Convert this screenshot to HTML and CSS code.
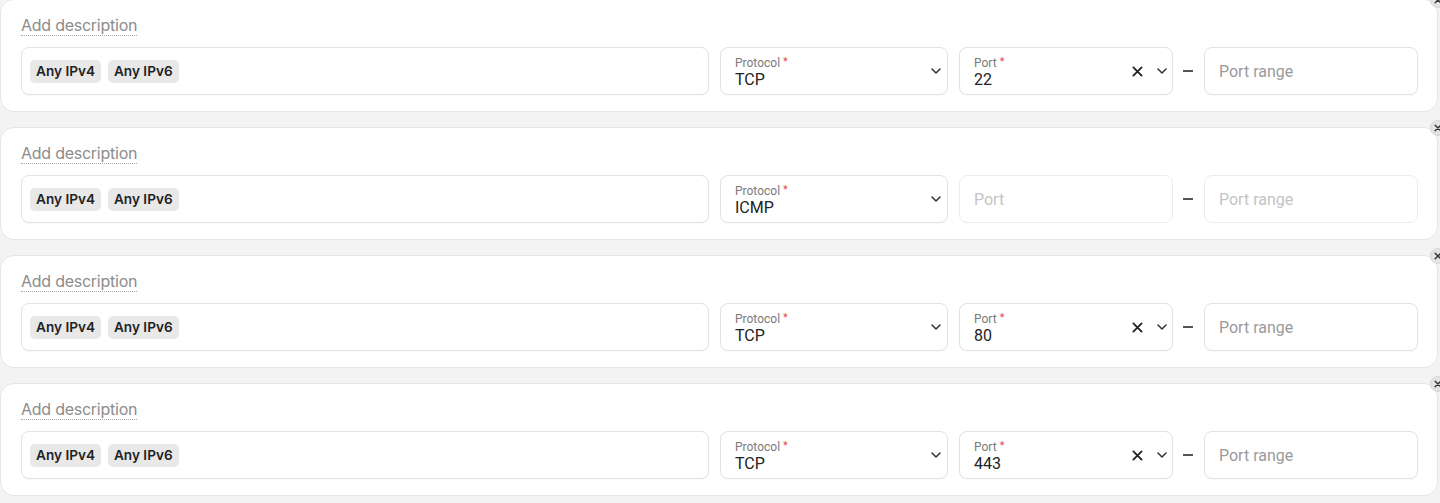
FILE: index.html
```html
<!DOCTYPE html>
<html>
<head>
<meta charset="utf-8">
<link rel="stylesheet" href="styles.css">
</head>
<body>
<div class="rules">
  <div class="card">
    <button class="remove" aria-label="Remove"><svg viewBox="0 0 10 10" width="8" height="8"><path d="M1.5 1.5l7 7M8.5 1.5l-7 7" stroke="#333" stroke-width="1.8" stroke-linecap="round"/></svg></button>
    <div class="desc-row"><span class="desc">Add description</span></div>
    <div class="fields">
      <div class="field addr"><span class="chip">Any IPv4</span><span class="chip">Any IPv6</span></div>
      <div class="field proto">
        <div class="stack"><span class="label">Protocol<span class="req">*</span></span><span class="value">TCP</span></div>
        <svg class="chev" viewBox="0 0 10 6" width="10" height="6"><path d="M1 1l4 4 4-4" fill="none" stroke="#333" stroke-width="1.5" stroke-linecap="round" stroke-linejoin="round"/></svg>
      </div>
      <div class="field port">
        <div class="stack"><span class="label">Port<span class="req">*</span></span><span class="value">22</span></div>
        <svg class="clear" viewBox="0 0 12 12" width="11" height="11"><path d="M1.5 1.5l9 9M10.5 1.5l-9 9" fill="none" stroke="#222" stroke-width="2" stroke-linecap="round"/></svg>
        <svg class="chev" viewBox="0 0 10 6" width="10" height="6"><path d="M1 1l4 4 4-4" fill="none" stroke="#333" stroke-width="1.5" stroke-linecap="round" stroke-linejoin="round"/></svg>
      </div>
      <span class="dash"></span>
      <div class="field range"><span class="ph">Port range</span></div>
    </div>
  </div>

  <div class="card">
    <button class="remove" aria-label="Remove"><svg viewBox="0 0 10 10" width="8" height="8"><path d="M1.5 1.5l7 7M8.5 1.5l-7 7" stroke="#333" stroke-width="1.8" stroke-linecap="round"/></svg></button>
    <div class="desc-row"><span class="desc">Add description</span></div>
    <div class="fields">
      <div class="field addr"><span class="chip">Any IPv4</span><span class="chip">Any IPv6</span></div>
      <div class="field proto">
        <div class="stack"><span class="label">Protocol<span class="req">*</span></span><span class="value">ICMP</span></div>
        <svg class="chev" viewBox="0 0 10 6" width="10" height="6"><path d="M1 1l4 4 4-4" fill="none" stroke="#333" stroke-width="1.5" stroke-linecap="round" stroke-linejoin="round"/></svg>
      </div>
      <div class="field port disabled"><span class="ph">Port</span></div>
      <span class="dash"></span>
      <div class="field range disabled"><span class="ph">Port range</span></div>
    </div>
  </div>

  <div class="card">
    <button class="remove" aria-label="Remove"><svg viewBox="0 0 10 10" width="8" height="8"><path d="M1.5 1.5l7 7M8.5 1.5l-7 7" stroke="#333" stroke-width="1.8" stroke-linecap="round"/></svg></button>
    <div class="desc-row"><span class="desc">Add description</span></div>
    <div class="fields">
      <div class="field addr"><span class="chip">Any IPv4</span><span class="chip">Any IPv6</span></div>
      <div class="field proto">
        <div class="stack"><span class="label">Protocol<span class="req">*</span></span><span class="value">TCP</span></div>
        <svg class="chev" viewBox="0 0 10 6" width="10" height="6"><path d="M1 1l4 4 4-4" fill="none" stroke="#333" stroke-width="1.5" stroke-linecap="round" stroke-linejoin="round"/></svg>
      </div>
      <div class="field port">
        <div class="stack"><span class="label">Port<span class="req">*</span></span><span class="value">80</span></div>
        <svg class="clear" viewBox="0 0 12 12" width="11" height="11"><path d="M1.5 1.5l9 9M10.5 1.5l-9 9" fill="none" stroke="#222" stroke-width="2" stroke-linecap="round"/></svg>
        <svg class="chev" viewBox="0 0 10 6" width="10" height="6"><path d="M1 1l4 4 4-4" fill="none" stroke="#333" stroke-width="1.5" stroke-linecap="round" stroke-linejoin="round"/></svg>
      </div>
      <span class="dash"></span>
      <div class="field range"><span class="ph">Port range</span></div>
    </div>
  </div>

  <div class="card">
    <button class="remove" aria-label="Remove"><svg viewBox="0 0 10 10" width="8" height="8"><path d="M1.5 1.5l7 7M8.5 1.5l-7 7" stroke="#333" stroke-width="1.8" stroke-linecap="round"/></svg></button>
    <div class="desc-row"><span class="desc">Add description</span></div>
    <div class="fields">
      <div class="field addr"><span class="chip">Any IPv4</span><span class="chip">Any IPv6</span></div>
      <div class="field proto">
        <div class="stack"><span class="label">Protocol<span class="req">*</span></span><span class="value">TCP</span></div>
        <svg class="chev" viewBox="0 0 10 6" width="10" height="6"><path d="M1 1l4 4 4-4" fill="none" stroke="#333" stroke-width="1.5" stroke-linecap="round" stroke-linejoin="round"/></svg>
      </div>
      <div class="field port">
        <div class="stack"><span class="label">Port<span class="req">*</span></span><span class="value">443</span></div>
        <svg class="clear" viewBox="0 0 12 12" width="11" height="11"><path d="M1.5 1.5l9 9M10.5 1.5l-9 9" fill="none" stroke="#222" stroke-width="2" stroke-linecap="round"/></svg>
        <svg class="chev" viewBox="0 0 10 6" width="10" height="6"><path d="M1 1l4 4 4-4" fill="none" stroke="#333" stroke-width="1.5" stroke-linecap="round" stroke-linejoin="round"/></svg>
      </div>
      <span class="dash"></span>
      <div class="field range"><span class="ph">Port range</span></div>
    </div>
  </div>
</div>
</body>
</html>
```

FILE: styles.css
```css
* { box-sizing: border-box; }
html, body { margin: 0; padding: 0; }
body {
  background: #f3f3f3;
  font-family: Roboto, "Liberation Sans", sans-serif;
  color: #222;
  overflow: hidden;
  height: 503px;
}
.rules {
  width: 1438px;
  margin-top: -1px;
  display: flex;
  flex-direction: column;
  gap: 15px;
}
.card {
  position: relative;
  background: #fff;
  border: 1px solid #e6e6e6;
  border-radius: 14px;
  padding: 15px 19px 16px 20px;
}
.remove {
  position: absolute;
  top: -8px;
  right: -9px;
  width: 16px;
  height: 16px;
  border-radius: 50%;
  border: 1px solid #d6d6d6;
  background: #e4e4e4;
  padding: 0;
  display: flex;
  align-items: center;
  justify-content: center;
}
.desc-row { height: 21px; margin-bottom: 11px; }
.desc {
  display: inline-block;
  font-family: Inter, "Liberation Sans", sans-serif;
  font-size: 16px;
  line-height: 20px;
  letter-spacing: -0.25px;
  color: #8c8c8c;
  border-bottom: 1px dotted #a8a8a8;
}
.fields {
  display: flex;
  align-items: center;
  height: 48px;
}
.field {
  height: 48px;
  border: 1px solid #e2e2e2;
  border-radius: 8px;
  background: #fff;
  box-shadow: 0 1px 2px rgba(0,0,0,0.03);
  display: flex;
  align-items: center;
}
.addr {
  flex: 1;
  padding: 0 8px;
  gap: 7px;
}
.chip {
  font-family: Inter, "Liberation Sans", sans-serif;
  font-weight: 600;
  font-size: 13.6px;
  line-height: 23px;
  height: 23px;
  padding: 0 6px;
  background: #e8e8e8;
  border-radius: 5px;
  color: #222;
}
.proto {
  width: 228px;
  margin-left: 11px;
  padding: 0 6px 0 14px;
  align-items: flex-start;
}
.port {
  width: 214px;
  margin-left: 11px;
  padding: 0 5px 0 14px;
  align-items: flex-start;
}
.stack {
  flex: 1;
  display: flex;
  flex-direction: column;
  padding-top: 7px;
}
.label {
  font-size: 12px;
  line-height: 13px;
  color: #7a7a7a;
}
.req {
  color: #e5484d;
  margin-left: 3px;
  font-size: 11px;
  vertical-align: 2px;
}
.value {
  font-size: 16px;
  line-height: 20px;
  color: #222;
}
.chev, .clear { align-self: center; flex: none; }
.clear { margin-right: 14px; }
.dash {
  width: 10px;
  height: 1.5px;
  margin: 0 11px 0 10px;
  background: #555;
  flex: none;
}
.range {
  width: 214px;
  padding: 0 14px;
}
.ph {
  font-size: 16px;
  color: #9a9a9a;
}
.disabled { border-color: #ececec; box-shadow: none; }
.disabled .ph { color: #c4c4c4; }
.port.disabled { padding: 0 14px; align-items: center; }
```
